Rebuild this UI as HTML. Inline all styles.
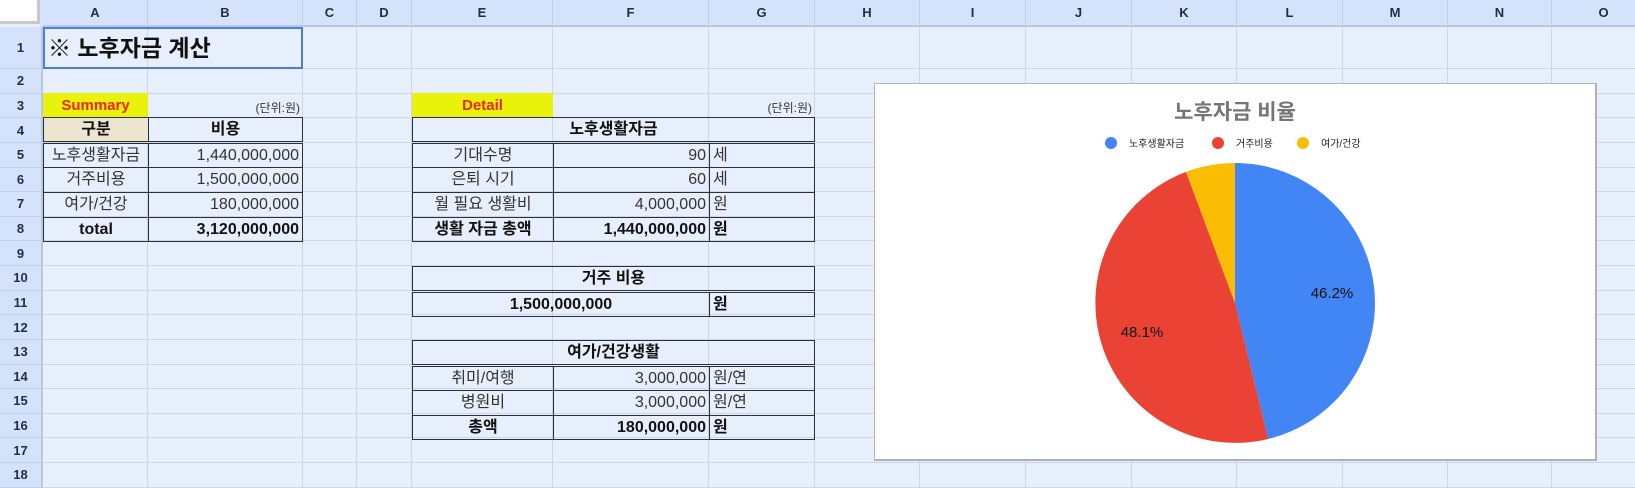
<!DOCTYPE html>
<html><head><meta charset="utf-8">
<style>
*{margin:0;padding:0;box-sizing:border-box}
body{width:1635px;height:488px;overflow:hidden;background:#e8effc;position:relative;font-family:"Liberation Sans","Noto Sans CJK KR","NanumGothic",sans-serif;}
.a{position:absolute}
.hl{position:absolute;height:1px;background:#cbd6e6}
.vl{position:absolute;width:1px;background:#cbd6e6}
.ch{position:absolute;top:0;height:27px;background:#d4e3fb;font-size:13px;font-weight:bold;color:#1f2d4a;display:flex;align-items:center;justify-content:center;border-right:1px solid #c2d0e4;border-bottom:2px solid #b7c8e0}
.rh{position:absolute;left:0;width:43px;background:#d4e3fb;font-size:13px;font-weight:bold;color:#1f2d4a;display:flex;align-items:center;justify-content:center;border-bottom:1px solid #c2d0e4;border-right:2px solid #b7c8e0}
.c{position:absolute;display:flex;align-items:center;font-size:16px;line-height:1;color:#333;white-space:nowrap;overflow:hidden}
.bx{border:1px solid #2b2f36}
.ctr{justify-content:center}.rt{justify-content:flex-end;padding-right:3px}.lf{justify-content:flex-start;padding-left:3px}
.b{font-weight:bold;color:#111}
</style></head><body>
<div id="g"></div>
<script>
var cols=[43,148,303,357,412,553,709,815,920,1026,1132,1237,1343,1448,1552,1656];
var names="ABCDEFGHIJKLMNO";
function rt(n){return n==1?27:69+(n-2)*24.625;}
var h='';
for(var i=0;i<15;i++){h+='<div class="ch" style="left:'+cols[i]+'px;width:'+(cols[i+1]-cols[i])+'px">'+names[i]+'</div>';
 h+='<div class="vl" style="left:'+(cols[i+1]-1)+'px;top:27px;height:461px"></div>';}
h+='<div class="a" style="left:0;top:0;width:40px;height:24px;background:#fff;border-right:3px solid #c8c8c8;border-bottom:3px solid #c8c8c8"></div>';
h+='<div class="a" style="left:40px;top:0;width:3px;height:27px;background:#d4e3fb"></div>';
for(var r=1;r<=18;r++){var t=rt(r),b=rt(r+1);h+='<div class="rh" style="top:'+t+'px;height:'+(b-t)+'px">'+r+'</div>';
 h+='<div class="hl" style="left:43px;width:1600px;top:'+(b-1)+'px"></div>';}
document.getElementById('g').innerHTML=h;
</script>
<div class="c b" style="left:43px;top:27px;width:260px;height:42px;border:2px solid #4a7fd4;font-size:23px;padding-left:3px">※ 노후자금 계산</div>
<div class="c ctr b" style="left:43px;top:93px;width:105px;height:24px;background:#e8f20a;color:#e8281e;font-size:15px">Summary</div>
<div class="c rt" style="left:148px;top:93px;width:155px;height:24px;font-size:12px;align-items:flex-end;padding-bottom:3px">(단위:원)</div>
<div class="c ctr b bx" style="left:43px;top:117px;width:106px;height:25px;background:#ece5cf">구분</div>
<div class="c ctr b bx" style="left:148px;top:117px;width:155px;height:25px">비용</div>
<div class="c ctr bx" style="left:43px;top:143px;width:106px;height:25px">노후생활자금</div>
<div class="c rt bx" style="left:148px;top:143px;width:155px;height:25px">1,440,000,000</div>
<div class="c ctr bx" style="left:43px;top:167px;width:106px;height:26px">거주비용</div>
<div class="c rt bx" style="left:148px;top:167px;width:155px;height:26px">1,500,000,000</div>
<div class="c ctr bx" style="left:43px;top:192px;width:106px;height:26px">여가/건강</div>
<div class="c rt bx" style="left:148px;top:192px;width:155px;height:26px">180,000,000</div>
<div class="c ctr b bx" style="left:43px;top:217px;width:106px;height:25px">total</div>
<div class="c rt b bx" style="left:148px;top:217px;width:155px;height:25px">3,120,000,000</div>
<div class="c ctr b" style="left:412px;top:93px;width:141px;height:24px;background:#e8f20a;color:#e8281e;font-size:15px">Detail</div>
<div class="c rt" style="left:709px;top:93px;width:106px;height:24px;font-size:12px;align-items:flex-end;padding-bottom:3px">(단위:원)</div>
<div class="c ctr b bx" style="left:412px;top:117px;width:403px;height:25px">노후생활자금</div>
<div class="c ctr bx" style="left:412px;top:143px;width:142px;height:25px">기대수명</div>
<div class="c rt bx" style="left:553px;top:143px;width:157px;height:25px">90</div>
<div class="c lf bx" style="left:709px;top:143px;width:106px;height:25px">세</div>
<div class="c ctr bx" style="left:412px;top:167px;width:142px;height:26px">은퇴 시기</div>
<div class="c rt bx" style="left:553px;top:167px;width:157px;height:26px">60</div>
<div class="c lf bx" style="left:709px;top:167px;width:106px;height:26px">세</div>
<div class="c ctr bx" style="left:412px;top:192px;width:142px;height:26px">월 필요 생활비</div>
<div class="c rt bx" style="left:553px;top:192px;width:157px;height:26px">4,000,000</div>
<div class="c lf bx" style="left:709px;top:192px;width:106px;height:26px">원</div>
<div class="c ctr b bx" style="left:412px;top:217px;width:142px;height:25px">생활 자금 총액</div>
<div class="c rt b bx" style="left:553px;top:217px;width:157px;height:25px">1,440,000,000</div>
<div class="c lf b bx" style="left:709px;top:217px;width:106px;height:25px">원</div>
<div class="c ctr b bx" style="left:412px;top:266px;width:403px;height:25px">거주 비용</div>
<div class="c ctr b bx" style="left:412px;top:292px;width:298px;height:25px">1,500,000,000</div>
<div class="c lf b bx" style="left:709px;top:292px;width:106px;height:25px">원</div>
<div class="c ctr b bx" style="left:412px;top:340px;width:403px;height:25px">여가/건강생활</div>
<div class="c ctr bx" style="left:412px;top:366px;width:142px;height:25px">취미/여행</div>
<div class="c rt bx" style="left:553px;top:366px;width:157px;height:25px">3,000,000</div>
<div class="c lf bx" style="left:709px;top:366px;width:106px;height:25px">원/연</div>
<div class="c ctr bx" style="left:412px;top:390px;width:142px;height:26px">병원비</div>
<div class="c rt bx" style="left:553px;top:390px;width:157px;height:26px">3,000,000</div>
<div class="c lf bx" style="left:709px;top:390px;width:106px;height:26px">원/연</div>
<div class="c ctr b bx" style="left:412px;top:415px;width:142px;height:25px">총액</div>
<div class="c rt b bx" style="left:553px;top:415px;width:157px;height:25px">180,000,000</div>
<div class="c lf b bx" style="left:709px;top:415px;width:106px;height:25px">원</div>
<div class="a" style="left:874px;top:83px;width:723px;height:378px;background:#fff;border:1px solid #b5b5b5;border-right:2px solid #b0b0b0;border-bottom:2px solid #b0b0b0">
<svg width="723" height="378" viewBox="874 83 723 378" style="position:absolute;left:-1px;top:-1px">
<text x="1235" y="119" text-anchor="middle" font-size="21" font-weight="bold" fill="#757575" font-family="Liberation Sans,Noto Sans CJK KR,sans-serif">노후자금 비율</text>
<circle cx="1111" cy="143" r="6" fill="#4285f4"/><text x="1129" y="147" font-size="10" fill="#222" font-family="Liberation Sans,Noto Sans CJK KR,sans-serif">노후생활자금</text>
<circle cx="1218" cy="143" r="6" fill="#ea4335"/><text x="1236" y="147" font-size="10" fill="#222" font-family="Liberation Sans,Noto Sans CJK KR,sans-serif">거주비용</text>
<circle cx="1303" cy="143" r="6" fill="#fbbc04"/><text x="1321" y="147" font-size="10" fill="#222" font-family="Liberation Sans,Noto Sans CJK KR,sans-serif">여가/건강</text>
<path d="M1235 303 L1235 163 A140 140 0 0 1 1268.2 439 Z" fill="#4285f4"/>
<path d="M1235 303 L1268.2 439 A140 140 0 0 1 1186 171.9 Z" fill="#ea4335"/>
<path d="M1235 303 L1186 171.9 A140 140 0 0 1 1235 163 Z" fill="#fbbc04"/>
<text x="1332" y="298" text-anchor="middle" font-size="15" fill="#111" font-family="Liberation Sans,sans-serif">46.2%</text>
<text x="1142" y="337" text-anchor="middle" font-size="15" fill="#111" font-family="Liberation Sans,sans-serif">48.1%</text>
</svg></div>
</body></html>
